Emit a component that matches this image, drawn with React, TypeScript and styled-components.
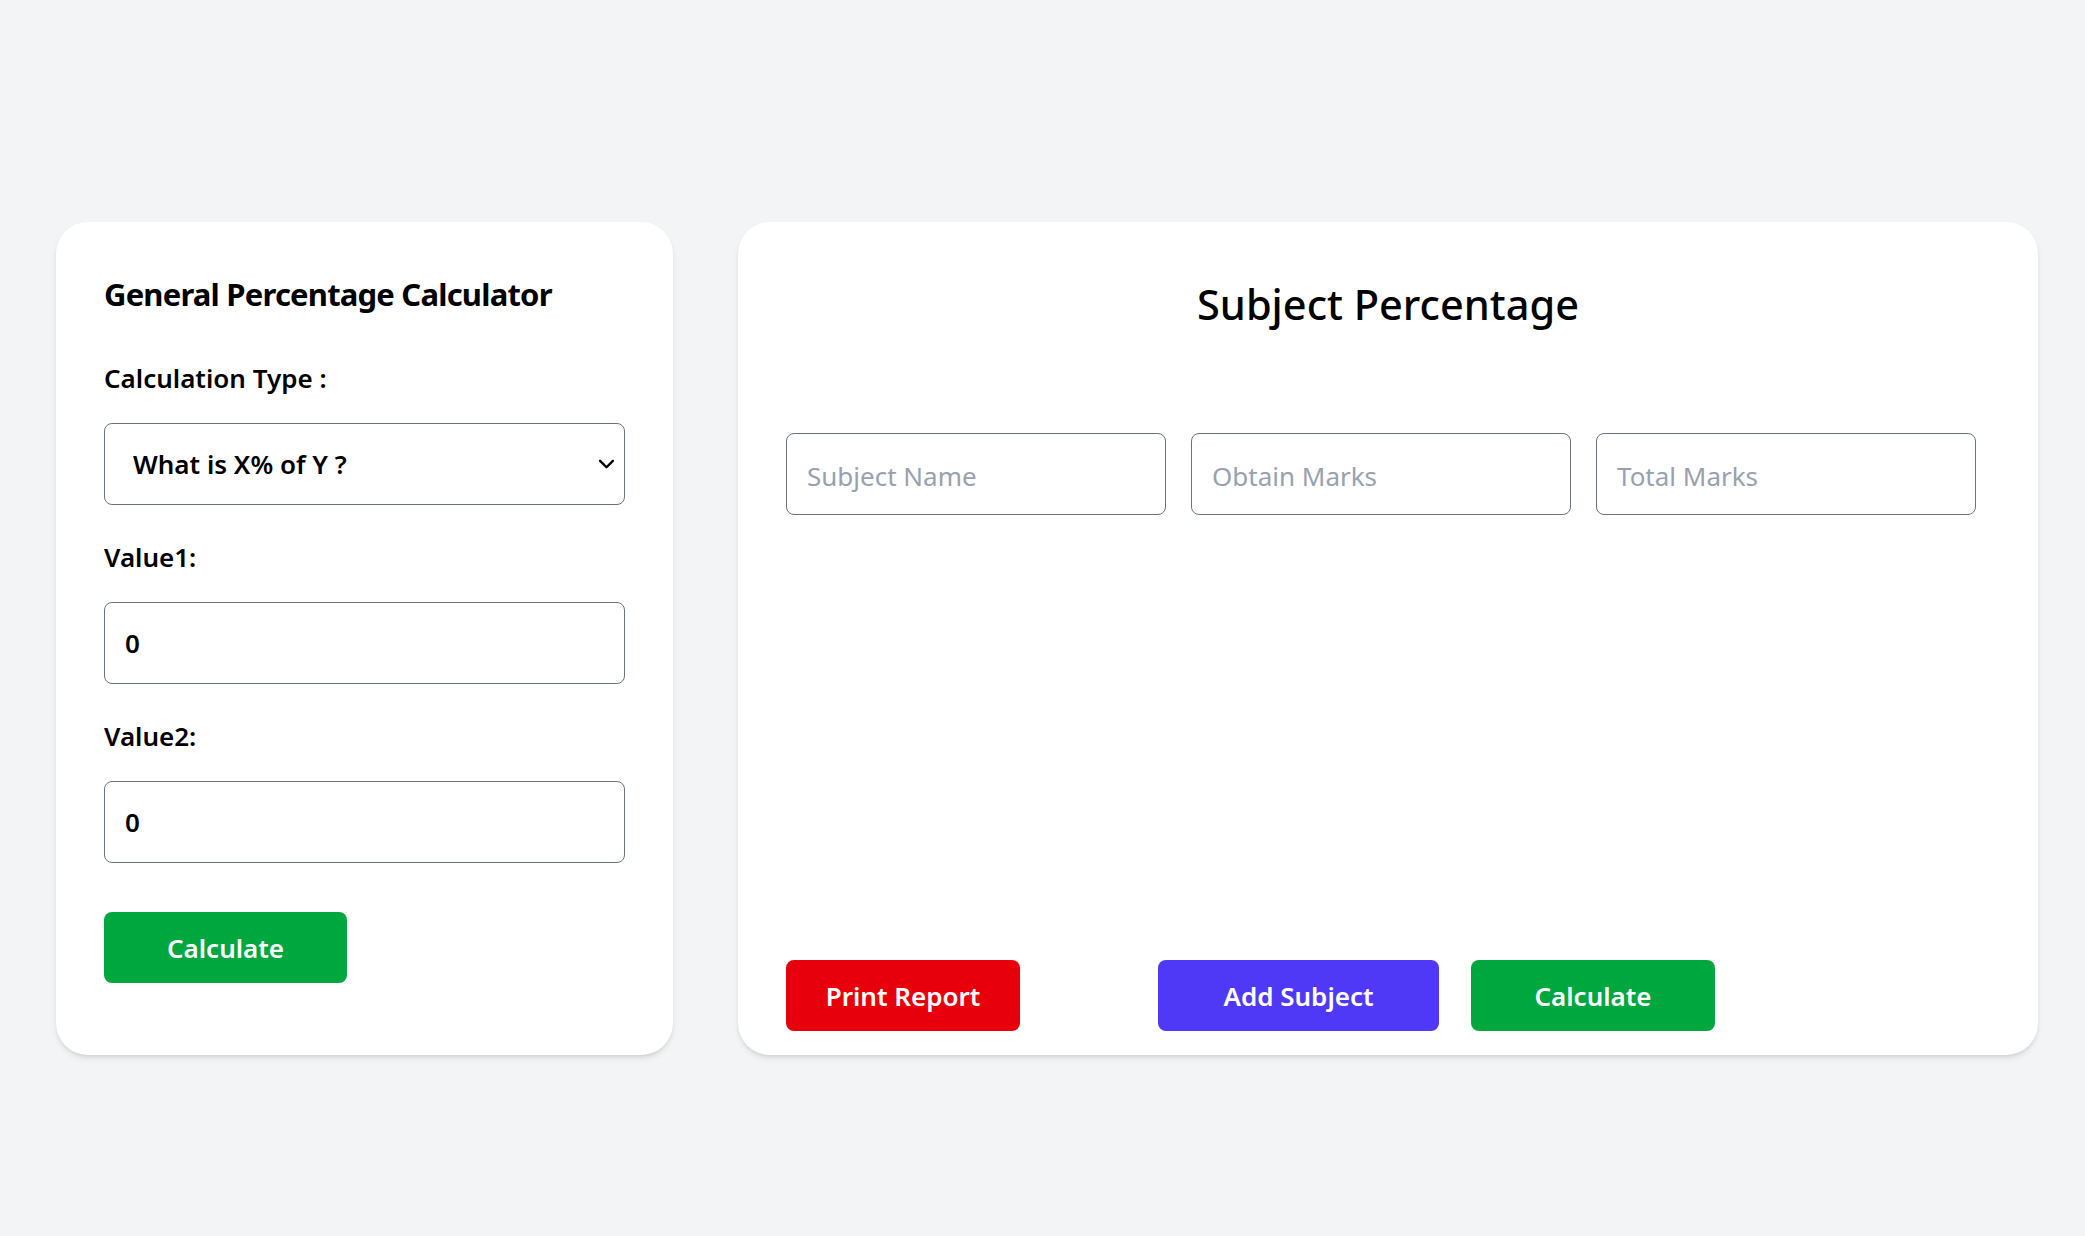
import React, { useState } from "react";
import styled, { createGlobalStyle } from "styled-components";

const GlobalStyle = createGlobalStyle`
  html, body {
    margin: 0;
    padding: 0;
    background: #f3f4f6;
  }
  body {
    font-family: "Noto Sans", "Open Sans", sans-serif;
    color: #000000;
  }
  * {
    box-sizing: border-box;
  }
`;

const Page = styled.div`
  min-height: 1236px;
  display: grid;
  grid-template-columns: 617px 1300px;
  column-gap: 65px;
  align-items: stretch;
  align-content: start;
  padding: 222px 0 0 56px;
`;

const Card = styled.div`
  background: #ffffff;
  border-radius: 32px;
  box-shadow: 0 4px 6px -1px rgba(0, 0, 0, 0.1), 0 2px 4px -2px rgba(0, 0, 0, 0.1);
  display: flex;
  flex-direction: column;
`;

const LeftCard = styled(Card)`
  padding: 48px 48px 72px 48px;
`;

const RightCard = styled(Card)`
  padding: 55px 48px 24px 48px;
`;

const Heading = styled.h2`
  margin: 0;
  font-size: 31px;
  line-height: 48px;
  font-weight: 700;
  letter-spacing: -0.8px;
`;

const Label = styled.label<{ $top: number }>`
  display: block;
  margin-top: ${({ $top }) => $top}px;
  font-size: 26px;
  line-height: 36px;
  font-weight: 600;
`;

const fieldBase = `
  display: block;
  width: 100%;
  height: 82px;
  margin-top: 27px;
  border: 1.5px solid #6a7282;
  border-radius: 8px;
  background: #ffffff;
  font-family: "Noto Sans", "Open Sans", sans-serif;
  font-size: 26px;
  color: #000000;
  outline: none;
`;

const Select = styled.select`
  ${fieldBase}
  appearance: none;
  padding: 0 40px 0 28px;
  font-weight: 600;
  background-image: url("data:image/svg+xml;utf8,<svg xmlns='http://www.w3.org/2000/svg' width='18' height='12' viewBox='0 0 18 12'><path d='M2 2 L9 9 L16 2' fill='none' stroke='black' stroke-width='2.6' stroke-linecap='round' stroke-linejoin='round'/></svg>");
  background-repeat: no-repeat;
  background-position: right 9px center;
  background-size: 17px 11px;
`;

const NumberInput = styled.input`
  ${fieldBase}
  padding: 0 20px;
  font-weight: 600;
`;

const Button = styled.button<{ $color: string; $width: number }>`
  width: ${({ $width }) => $width}px;
  height: 71px;
  border: none;
  border-radius: 8px;
  background: ${({ $color }) => $color};
  color: #ffffff;
  font-family: "Noto Sans", "Open Sans", sans-serif;
  font-size: 26px;
  font-weight: 600;
  cursor: pointer;
`;

const CalcButton = styled(Button)`
  margin-top: 49px;
`;

const Title = styled.h1`
  margin: 0;
  text-align: center;
  font-size: 41.5px;
  line-height: 54px;
  font-weight: 500;
`;

const InputRow = styled.div`
  width: 1190px;
  display: grid;
  grid-template-columns: repeat(3, 1fr);
  column-gap: 25px;
  margin-top: 102px;
`;

const TextField = styled.input`
  height: 82px;
  width: 100%;
  padding: 4px 20px 0 20px;
  border: 1.5px solid #6a7282;
  border-radius: 8px;
  font-family: "Noto Sans", "Open Sans", sans-serif;
  font-size: 26px;
  color: #000000;
  outline: none;
  &::placeholder {
    color: #99a1af;
  }
`;

const ButtonRow = styled.div`
  margin-top: auto;
  display: flex;
  gap: 32px;
`;

const PrintButton = styled(Button)`
  margin-right: 106px;
`;

export default function App() {
  const [type, setType] = useState("xofy");
  const [value1, setValue1] = useState("0");
  const [value2, setValue2] = useState("0");

  return (
    <>
      <GlobalStyle />
      <Page>
        <LeftCard>
          <Heading>General Percentage Calculator</Heading>
          <Label $top={42}>Calculation Type :</Label>
          <Select value={type} onChange={(e) => setType(e.target.value)}>
            <option value="xofy">What is X% of Y ?</option>
            <option value="xisy">X is what % of Y ?</option>
            <option value="change">% change from X to Y</option>
          </Select>
          <Label $top={34}>Value1:</Label>
          <NumberInput value={value1} onChange={(e) => setValue1(e.target.value)} />
          <Label $top={34}>Value2:</Label>
          <NumberInput value={value2} onChange={(e) => setValue2(e.target.value)} />
          <CalcButton $color="#00a63e" $width={243}>Calculate</CalcButton>
        </LeftCard>
        <RightCard>
          <Title>Subject Percentage</Title>
          <InputRow>
            <TextField placeholder="Subject Name" />
            <TextField placeholder="Obtain Marks" />
            <TextField placeholder="Total Marks" />
          </InputRow>
          <ButtonRow>
            <PrintButton $color="#e7000b" $width={234}>Print Report</PrintButton>
            <Button $color="#4f39f6" $width={281}>Add Subject</Button>
            <Button $color="#00a63e" $width={244}>Calculate</Button>
          </ButtonRow>
        </RightCard>
      </Page>
    </>
  );
}
